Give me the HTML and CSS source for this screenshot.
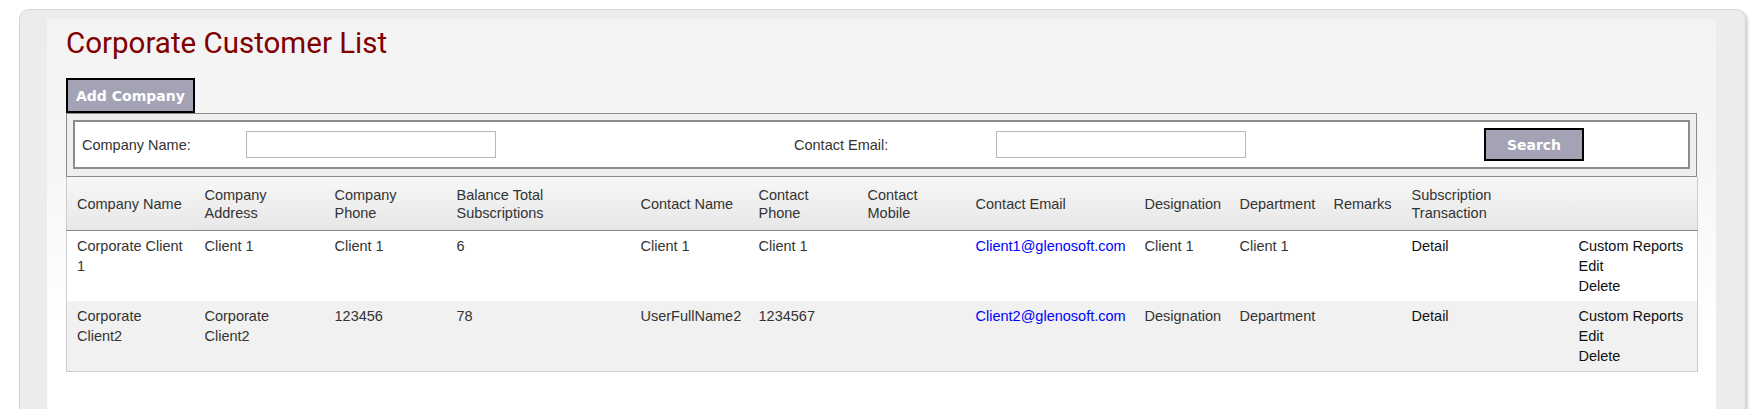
FILE: index.html
```html
<!DOCTYPE html>
<html lang="en">
<head>
<meta charset="utf-8">
<title>Corporate Customer List</title>
<link rel="stylesheet" href="styles.css">
</head>
<body>
<div class="page">
  <div class="card">
    <div class="panel">
      <h1 class="title">Corporate Customer List</h1>
      <button class="btn btn-add" type="button">Add Company</button>
      <div class="search-outer">
        <div class="search-inner">
          <label class="search-label">Company Name:</label>
          <input class="search-input" type="text">
          <label class="search-label">Contact Email:</label>
          <input class="search-input" type="text">
          <button class="btn btn-search" type="button">Search</button>
        </div>
      </div>
      <table class="grid">
        <colgroup>
          <col class="c1"><col class="c2"><col class="c3"><col class="c4"><col class="c5"><col class="c6"><col class="c7"><col class="c8"><col class="c9"><col class="c10"><col class="c11"><col class="c12"><col class="c13">
        </colgroup>
        <thead>
          <tr>
            <th>Company Name</th>
            <th>Company Address</th>
            <th>Company Phone</th>
            <th>Balance Total Subscriptions</th>
            <th>Contact Name</th>
            <th>Contact Phone</th>
            <th>Contact Mobile</th>
            <th>Contact Email</th>
            <th>Designation</th>
            <th>Department</th>
            <th>Remarks</th>
            <th>Subscription Transaction</th>
            <th></th>
          </tr>
        </thead>
        <tbody>
          <tr>
            <td>Corporate Client 1</td>
            <td>Client 1</td>
            <td>Client 1</td>
            <td>6</td>
            <td>Client 1</td>
            <td>Client 1</td>
            <td></td>
            <td><a class="mail" href="#">Client1@glenosoft.com</a></td>
            <td>Client 1</td>
            <td>Client 1</td>
            <td></td>
            <td><a class="act" href="#">Detail</a></td>
            <td><a class="act act-block" href="#">Custom Reports</a><a class="act act-block" href="#">Edit</a><a class="act act-block" href="#">Delete</a></td>
          </tr>
          <tr class="alt">
            <td>Corporate Client2</td>
            <td>Corporate Client2</td>
            <td>123456</td>
            <td>78</td>
            <td>UserFullName2</td>
            <td>1234567</td>
            <td></td>
            <td><a class="mail" href="#">Client2@glenosoft.com</a></td>
            <td>Designation</td>
            <td>Department</td>
            <td></td>
            <td><a class="act" href="#">Detail</a></td>
            <td><a class="act act-block" href="#">Custom Reports</a><a class="act act-block" href="#">Edit</a><a class="act act-block" href="#">Delete</a></td>
          </tr>
        </tbody>
      </table>
    </div>
  </div>
</div>
</body>
</html>
```

FILE: styles.css
```css
html, body {
  margin: 0;
  padding: 0;
  background: #ffffff;
  font-family: "Liberation Sans", Arial, sans-serif;
  overflow: hidden;
}

.page {
  padding: 9px 18px 0 19px;
}

.card {
  box-sizing: border-box;
  min-height: 440px;
  background: #ececec;
  border: 1px solid #d4d4d4;
  border-radius: 10px 10px 0 0;
  box-shadow: 2px 2px 3px rgba(0, 0, 0, 0.18);
  padding: 9px 29px 0 27px;
}

.panel {
  box-sizing: border-box;
  min-height: 430px;
  padding: 7px 19px 0 19px;
  background: linear-gradient(to bottom, #f3f3f3 0px, #f6f6f6 150px, #ffffff 300px);
}

.title {
  margin: 0;
  font-family: Roboto, "Liberation Sans", Arial, sans-serif;
  font-weight: 400;
  font-size: 29.5px;
  line-height: 35px;
  color: #800000;
}

.btn {
  box-sizing: border-box;
  font-family: "DejaVu Sans", Verdana, sans-serif;
  font-weight: bold;
  font-size: 14px;
  color: #ffffff;
  background: #a3a3b5;
  border: 2px solid #000000;
  border-radius: 0;
  padding: 0 8px;
  margin: 0;
  cursor: pointer;
}

.btn-add {
  display: block;
  height: 35px;
  margin-top: 17px;
}

.btn-search {
  width: 100px;
  height: 33px;
  padding: 0;
}

.search-outer {
  background: #efefef;
  border: 1px solid #8a8a8a;
  padding: 6px 6px 7px 6px;
}

.search-inner {
  display: grid;
  grid-template-columns: 164px 548px 202px 488px auto;
  align-items: center;
  background: #ffffff;
  border: 2px solid #8c8c8c;
  padding: 6px 0 6px 7px;
}

.search-label {
  font-size: 14.5px;
  color: #333333;
}

.search-input {
  box-sizing: border-box;
  width: 250px;
  height: 27px;
  border: 1px solid #b8b8b8;
  background: #ffffff;
  padding: 0 4px;
  margin: 0;
  font-family: "Liberation Sans", Arial, sans-serif;
  font-size: 14px;
}

.grid {
  width: 100%;
  border-collapse: collapse;
  table-layout: fixed;
  font-size: 14.5px;
  color: #333333;
  border: 1px solid #cccccc;
  border-top: none;
}

.c1 { width: 128px; }
.c2 { width: 130px; }
.c3 { width: 122px; }
.c4 { width: 184px; }
.c5 { width: 118px; }
.c6 { width: 109px; }
.c7 { width: 108px; }
.c8 { width: 169px; }
.c9 { width: 95px; }
.c10 { width: 94px; }
.c11 { width: 78px; }
.c12 { width: 167px; }
.c13 { width: 129px; }

.grid th {
  font-weight: normal;
  text-align: left;
  vertical-align: middle;
  padding: 9px 10px 8px 10px;
  line-height: 18px;
  background: linear-gradient(to bottom, #f7f7f7, #e7e7e7);
  border-bottom: 1px solid #888888;
}

.grid td {
  vertical-align: top;
  text-align: left;
  padding: 5px 10px;
  line-height: 20px;
  background: #ffffff;
}

.grid tr.alt td {
  background: #f1f1f1;
}

.mail {
  color: #0000ff;
  text-decoration: none;
}

.act {
  color: #111111;
  text-decoration: none;
}

.act-block {
  display: block;
}
```
